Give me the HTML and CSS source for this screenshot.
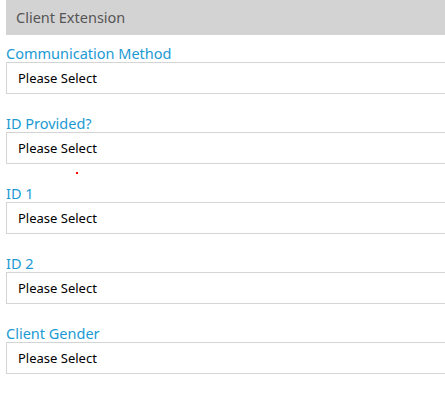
FILE: index.html
```html
<!DOCTYPE html>
<html lang="en">
<head>
    <meta charset="UTF-8">
    <meta name="viewport" content="width=device-width, initial-scale=1.0">
    <title>Client Extension</title>
    <link rel="stylesheet" href="styles.css">
</head>
<body>
    <div class="panel">
        <div class="panel-header">Client Extension</div>

        <div class="field">
            <label class="field-label">Communication Method</label>
            <div class="select-box">Please Select</div>
        </div>

        <div class="field">
            <label class="field-label">ID Provided?</label>
            <div class="select-box">Please Select</div>
            <span class="error-dot"></span>
        </div>

        <div class="field">
            <label class="field-label">ID 1</label>
            <div class="select-box">Please Select</div>
        </div>

        <div class="field">
            <label class="field-label">ID 2</label>
            <div class="select-box">Please Select</div>
        </div>

        <div class="field">
            <label class="field-label">Client Gender</label>
            <div class="select-box">Please Select</div>
        </div>
    </div>
</body>
</html>
```

FILE: styles.css
```css
body {
    margin: 0;
    padding: 0;
    background-color: #fff;
    font-family: "Noto Sans", "Open Sans", sans-serif;
    overflow: hidden;
}

.panel {
    width: 460px;
    padding-left: 6px;
}

.panel-header {
    height: 35px;
    line-height: 35px;
    padding-left: 10px;
    background-color: #d3d3d3;
    color: #555;
    font-size: 14.5px;
}

/* each dropdown row */
.field {
    position: relative;
    margin-bottom: 11px;
}

.field-label {
    display: block;
    padding-top: 9px;
    line-height: 18px;
    font-size: 14.5px;
    color: #1b9ad4;
}

.select-box {
    box-sizing: border-box;
    height: 32px;
    line-height: 30px;
    padding-left: 11px;
    border: 1px solid #d4d4d4;
    font-size: 13px;
    color: #000;
}

.error-dot {
    position: absolute;
    left: 70px;
    bottom: -10px;
    width: 2px;
    height: 2px;
    background-color: #f00;
}
```
